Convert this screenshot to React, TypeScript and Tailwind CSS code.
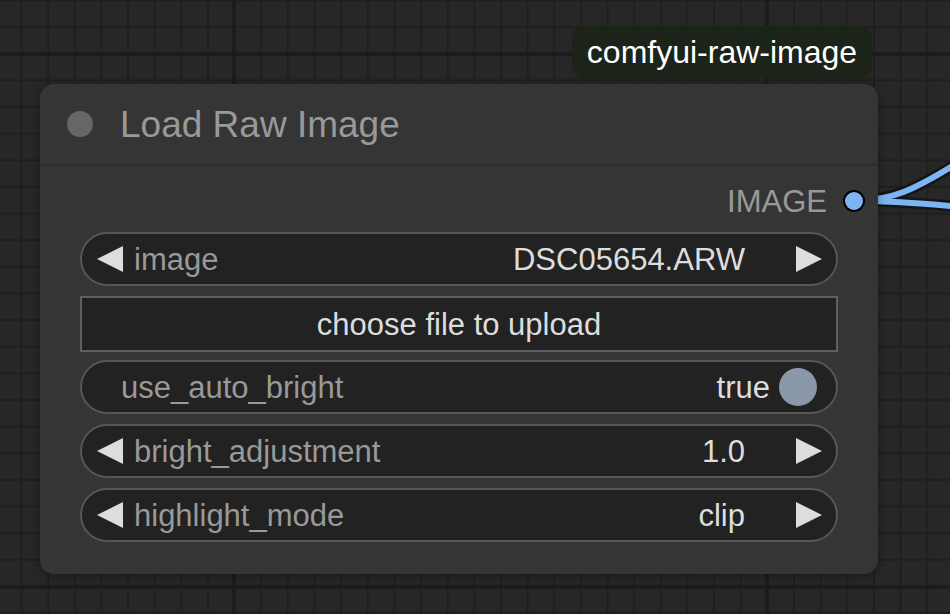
import React from "react";

const Arrow = ({ dir }: { dir: "left" | "right" }) => (
  <svg width="26" height="26" viewBox="0 0 26 26" className="shrink-0">
    {dir === "left" ? (
      <polygon points="26,0 26,26 0,13" fill="#dddddd" />
    ) : (
      <polygon points="0,0 0,26 26,13" fill="#dddddd" />
    )}
  </svg>
);

const combos = [
  { name: "image", value: "DSC05654.ARW" },
];

const numbers = [
  { name: "bright_adjustment", value: "1.0" },
  { name: "highlight_mode", value: "clip" },
];

function ComboRow({ name, value }: { name: string; value: string }) {
  return (
    <div className="h-[54px] rounded-full border-2 border-[#575757] bg-[#222222] flex items-center pl-[15px] pr-[14px]">
      <Arrow dir="left" />
      <span className="ml-[11px] text-[#999999]">{name}</span>
      <span className="ml-auto text-[#dddddd]">{value}</span>
      <span className="ml-[51px] flex">
        <Arrow dir="right" />
      </span>
    </div>
  );
}

export default function App() {
  return (
    <div className="relative w-[950px] h-[614px] overflow-hidden bg-[#272727] [background-image:linear-gradient(to_right,#1c1c1c_4px,transparent_4px),linear-gradient(to_bottom,#1c1c1c_4px,transparent_4px),linear-gradient(to_right,#1f1f1f_2px,transparent_2px),linear-gradient(to_bottom,#1f1f1f_2px,transparent_2px)] [background-size:533px_533px,533px_533px,26.65px_26.65px,26.65px_26.65px] [background-position:232px_0,0_52px,20.5px_0,0_26px] font-['Liberation_Sans',Arial,sans-serif] leading-none">
      {/* wires */}
      <svg className="absolute left-0 top-0" width="950" height="614">
        <path d="M860 200 C890 200, 912 192, 962 160" stroke="#151515" strokeWidth="11" fill="none" />
        <path d="M860 201 C900 201, 930 204, 962 207" stroke="#151515" strokeWidth="11" fill="none" />
        <path d="M860 200 C890 200, 912 192, 962 160" stroke="#7db4f3" strokeWidth="6" fill="none" />
        <path d="M860 201 C900 201, 930 204, 962 207" stroke="#7db4f3" strokeWidth="6" fill="none" />
      </svg>

      {/* group badge */}
      <div className="absolute left-[572px] top-[26px] w-[300px] h-[52px] rounded-[12px] bg-[#1c2319] flex items-center justify-center whitespace-nowrap text-[32px] text-white">
        comfyui-raw-image
      </div>

      {/* node */}
      <div className="absolute left-[40px] top-[84px] w-[838px] rounded-[14px] bg-[#353535] shadow-[0_2px_10px_rgba(0,0,0,0.35)] flex flex-col">
        <div className="h-[82px] border-b-2 border-[#2d2d2d] flex items-center pl-[27px]">
          <span className="w-[26px] h-[26px] rounded-full bg-[#666666]" />
          <span className="ml-[27px] text-[37px] text-[#999999]">Load Raw Image</span>
        </div>

        <div className="pt-[18px] pb-[32px] px-[40px] flex flex-col text-[31px]">
          <div className="h-[34px] flex items-center justify-end -mr-[27px]">
            <span className="text-[#999999]">IMAGE</span>
            <span className="ml-[16px] w-[22px] h-[22px] rounded-full bg-[#7db4f3] border-2 border-black" />
          </div>

          <div className="mt-[14px] flex flex-col gap-[10px]">
            {combos.map((c) => (
              <ComboRow key={c.name} name={c.name} value={c.value} />
            ))}

            <div className="h-[56px] -mb-[2px] border-2 border-[#5e5e5e] bg-[#222222] flex items-center justify-center text-[#dddddd]">
              choose file to upload
            </div>

            <div className="h-[54px] rounded-full border-2 border-[#575757] bg-[#222222] flex items-center pl-[39px] pr-[19px]">
              <span className="text-[#999999]">use_auto_bright</span>
              <span className="ml-auto text-[#dddddd]">true</span>
              <span className="ml-[9px] w-[38px] h-[38px] rounded-full bg-[#8a98a9]" />
            </div>

            {numbers.map((n) => (
              <ComboRow key={n.name} name={n.name} value={n.value} />
            ))}
          </div>
        </div>
      </div>
    </div>
  );
}
